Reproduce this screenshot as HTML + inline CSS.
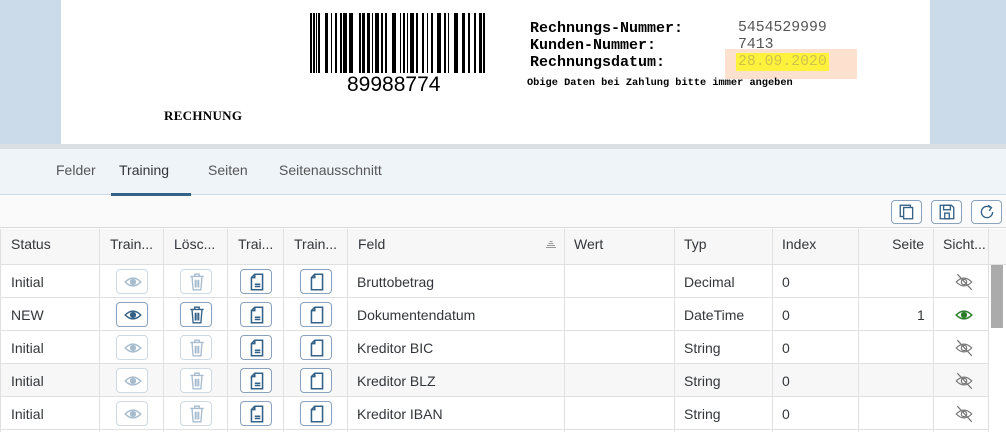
<!DOCTYPE html>
<html><head><meta charset="utf-8"><style>
*{margin:0;padding:0;box-sizing:border-box}
body{width:1006px;height:432px;overflow:hidden;background:#fff;font-family:"Liberation Sans",sans-serif;position:relative}
.a{position:absolute}
.mono{font-family:"Liberation Mono",monospace}
.tab{position:absolute;top:162px;font-size:14px;color:#32363a}
.cell{position:absolute;font-size:14px;color:#32363a;white-space:nowrap}
.btn{position:absolute;width:32px;height:25px;border:1px solid #8aa2bd;border-radius:4px;background:#fff}
.btn.dis{border-color:#cfd9e3}
.btn svg{position:absolute;left:6px;top:2px}
</style></head><body>
<div class="a" style="left:0;top:0;width:61px;height:144px;background:#ccdbe9"></div>
<div class="a" style="left:930px;top:0;width:76px;height:144px;background:#ccdbe9"></div>
<div class="a" style="left:0;top:144px;width:1006px;height:5px;background:#dcdfe1"></div>
<!-- barcode -->
<svg class="a" style="left:310px;top:13px" width="176" height="60">
<g fill="#000">
<rect x="0" y="0" width="2" height="60"/><rect x="3" y="0" width="2" height="60"/><rect x="6" y="0" width="1" height="60"/><rect x="8" y="0" width="2" height="60"/>
<rect x="15" y="0" width="3" height="60"/><rect x="21" y="0" width="1" height="60"/><rect x="25" y="0" width="2" height="60"/>
<rect x="30" y="0" width="2" height="60"/><rect x="33" y="0" width="4" height="60"/><rect x="39" y="0" width="4" height="60"/>
<rect x="49" y="0" width="2" height="60"/><rect x="52" y="0" width="3" height="60"/><rect x="57" y="0" width="3" height="60"/><rect x="62" y="0" width="1" height="60"/>
<rect x="65" y="0" width="4" height="60"/><rect x="71" y="0" width="2" height="60"/><rect x="75" y="0" width="2" height="60"/>
<rect x="82" y="0" width="4" height="60"/><rect x="90" y="0" width="1" height="60"/><rect x="93" y="0" width="2" height="60"/>
<rect x="97" y="0" width="1" height="60"/><rect x="100" y="0" width="4" height="60"/><rect x="106" y="0" width="2" height="60"/>
<rect x="112" y="0" width="2" height="60"/><rect x="117" y="0" width="1" height="60"/><rect x="121" y="0" width="2" height="60"/>
<rect x="127" y="0" width="4" height="60"/><rect x="134" y="0" width="2" height="60"/><rect x="138" y="0" width="1" height="60"/>
<rect x="144" y="0" width="4" height="60"/><rect x="152" y="0" width="3" height="60"/><rect x="158" y="0" width="2" height="60"/>
<rect x="164" y="0" width="2" height="60"/><rect x="169" y="0" width="3" height="60"/><rect x="173" y="0" width="2" height="60"/>
</g></svg>
<div class="a" style="left:347px;top:73px;font-size:21px;color:#000">89988774</div>
<div class="a" style="left:164px;top:108px;font-size:13px;font-weight:bold;font-family:'Liberation Serif',serif;letter-spacing:0.3px">RECHNUNG</div>
<div class="a mono" style="left:530px;top:20px;font-size:15px;font-weight:bold;line-height:17px">Rechnungs-Nummer:<br>Kunden-Nummer:<br>Rechnungsdatum:</div>
<div class="a" style="left:725px;top:49px;width:132px;height:30px;background:#fde0cd"></div>
<div class="a" style="left:736px;top:53px;width:93px;height:18px;background:#fff23c"></div>
<div class="a mono" style="left:738px;top:20px;font-size:14.8px;color:#555;line-height:17px">5454529999<br>7413<br><span style="color:#cfc24a">28.09.2020</span></div>
<div class="a mono" style="left:527px;top:77px;font-size:10.3px;font-weight:bold">Obige Daten bei Zahlung bitte immer angeben</div>
<!-- tabs -->
<div class="a" style="left:0;top:149px;width:1006px;height:46px;background:#eff4f9;border-bottom:1px solid #c7d9ec"></div>
<div class="tab" style="left:56px;color:#555">Felder</div>
<div class="tab" style="left:119px">Training</div>
<div class="tab" style="left:208px;color:#555">Seiten</div>
<div class="tab" style="left:279px;color:#555">Seitenausschnitt</div>
<div class="a" style="left:111px;top:193px;width:80px;height:3px;background:#346187"></div>
<!-- toolbar -->
<div class="a" style="left:0;top:196px;width:1006px;height:32px;background:#fafafa;border-bottom:1px solid #d9d9d9"></div>
<div class="btn" style="left:891px;top:200px;width:31px;height:24px"><svg width="18" height="18" viewBox="0 0 16 16" fill="none" stroke="#346187" stroke-width="1.2"><rect x="2" y="2" width="9" height="10"/><rect x="5" y="4" width="8" height="10" fill="#fff"/></svg></div>
<div class="btn" style="left:931px;top:200px;width:31px;height:24px"><svg width="18" height="18" viewBox="0 0 16 16" fill="none" stroke="#346187" stroke-width="1.2"><path d="M2 2h10l2 2v10H2z"/><rect x="5" y="2" width="6" height="4"/><rect x="6" y="9" width="4" height="5"/></svg></div>
<div class="btn" style="left:971px;top:200px;width:31px;height:24px"><svg width="18" height="18" viewBox="0 0 16 16" fill="none" stroke="#346187" stroke-width="1.2"><path d="M13 8a5 5 0 1 1-2-4"/><path d="M9 2l3 2-2 3"/></svg></div>
<!-- table header -->
<div class="a" style="left:0;top:229px;width:1006px;height:36px;background:#f7f7f7;border-bottom:1px solid #e0e0e0"></div>
<div class="a" style="left:0;top:363px;width:988px;height:33px;background:#f7f7f7"></div>
<svg class="a" style="left:0;top:229px" width="1006" height="203">
<g stroke="#e0e0e0" stroke-width="1">
<line x1="0.5" y1="0" x2="0.5" y2="203"/>
<line x1="99.5" y1="0" x2="99.5" y2="203"/><line x1="163.5" y1="0" x2="163.5" y2="203"/><line x1="227.5" y1="0" x2="227.5" y2="203"/><line x1="283.5" y1="0" x2="283.5" y2="203"/><line x1="347.5" y1="0" x2="347.5" y2="203"/><line x1="564.5" y1="0" x2="564.5" y2="203"/><line x1="674.5" y1="0" x2="674.5" y2="203"/><line x1="772.5" y1="0" x2="772.5" y2="203"/><line x1="858.5" y1="0" x2="858.5" y2="203"/><line x1="933.5" y1="0" x2="933.5" y2="203"/><line x1="988.5" y1="0" x2="988.5" y2="203"/>
<line x1="0" y1="68.5" x2="988" y2="68.5"/><line x1="0" y1="101.5" x2="988" y2="101.5"/><line x1="0" y1="134.5" x2="988" y2="134.5"/><line x1="0" y1="167.5" x2="988" y2="167.5"/><line x1="0" y1="200.5" x2="988" y2="200.5"/>
</g>
<path d="M549.5 12.5h3M548.5 14.5h5M547 16.5h8M546 18.5h10" stroke="#999" stroke-width="1"/>
</svg>
<div class="a" style="left:991px;top:265px;width:12px;height:63px;background:#ababab"></div>
<div class="cell" style="left:11px;top:236px">Status</div>
<div class="cell" style="left:110px;top:236px">Train...</div>
<div class="cell" style="left:174px;top:236px">Lösc...</div>
<div class="cell" style="left:238px;top:236px">Trai...</div>
<div class="cell" style="left:294px;top:236px">Train...</div>
<div class="cell" style="left:358px;top:236px">Feld</div>
<div class="cell" style="left:574px;top:236px">Wert</div>
<div class="cell" style="left:684px;top:236px">Typ</div>
<div class="cell" style="left:782px;top:236px">Index</div>
<div class="cell" style="left:866px;top:236px;width:58px;text-align:right">Seite</div>
<div class="cell" style="left:943px;top:236px">Sicht...</div>
<div id="rows"></div>
<script>
var data=[["Initial","Bruttobetrag","Decimal","",0],["NEW","Dokumentendatum","DateTime","1",1],["Initial","Kreditor BIC","String","",0],["Initial","Kreditor BLZ","String","",0],["Initial","Kreditor IBAN","String","",0]];
var h="";
data.forEach(function(d,i){var y=265+i*33;var t=y+9;var act=d[4];var dc=act?"":" dis";var ic=act?"#346187":"#a8bccf";
h+='<div class="cell" style="left:11px;top:'+t+'px">'+d[0]+'</div>';
h+='<div class="cell" style="left:357px;top:'+t+'px">'+d[1]+'</div>';
h+='<div class="cell" style="left:684px;top:'+t+'px">'+d[2]+'</div>';
h+='<div class="cell" style="left:782px;top:'+t+'px">0</div>';
h+='<div class="cell" style="left:917px;top:'+t+'px">'+d[3]+'</div>';
h+='<div class="btn'+dc+'" style="left:116px;top:'+(y+4)+'px"><svg width="20" height="20" viewBox="0 0 18 18"><path d="M2 9q7-7 14 0q-7 7-14 0z" fill="none" stroke="'+ic+'" stroke-width="1.3"/><circle cx="9" cy="9" r="2.8" fill="'+ic+'"/></svg></div>';
h+='<div class="btn'+dc+'" style="left:180px;top:'+(y+4)+'px"><svg width="20" height="20" viewBox="0 0 18 18" fill="none" stroke="'+ic+'" stroke-width="1.2"><path d="M3 4h12M7 4V2h4v2M4.5 4l1 12h7l1-12M7.5 7v7M9 7v7M10.5 7v7"/></svg></div>';
h+='<div class="btn" style="left:240px;top:'+(y+4)+'px"><svg width="20" height="20" viewBox="0 0 18 18" fill="none" stroke="#346187" stroke-width="1.4"><path d="M7 2h7v14H4V5z M4 5h3V2"/><path d="M7 11h5M7 13h5"/></svg></div>';
h+='<div class="btn" style="left:300px;top:'+(y+4)+'px"><svg width="20" height="20" viewBox="0 0 18 18" fill="none" stroke="#346187" stroke-width="1.4"><path d="M7 2h7v14H4V5z M4 5h3V2"/></svg></div>';
if(act){h+='<svg class="a" style="left:954px;top:'+(y+7)+'px" width="20" height="20" viewBox="0 0 18 18"><path d="M2 9q7-7 14 0q-7 7-14 0z" fill="none" stroke="#2b7d2b" stroke-width="1.4"/><circle cx="9" cy="9" r="2.8" fill="#2b7d2b"/></svg>';}
else{h+='<svg class="a" style="left:954px;top:'+(y+7)+'px" width="20" height="20" viewBox="0 0 18 18" fill="none" stroke="#777" stroke-width="1.1"><path d="M2 9q7-7 14 0q-7 7-14 0z"/><circle cx="9" cy="9" r="2.4"/><path d="M3 2l13 14"/></svg>';}
});
document.getElementById("rows").innerHTML=h;
</script>
</body></html>
